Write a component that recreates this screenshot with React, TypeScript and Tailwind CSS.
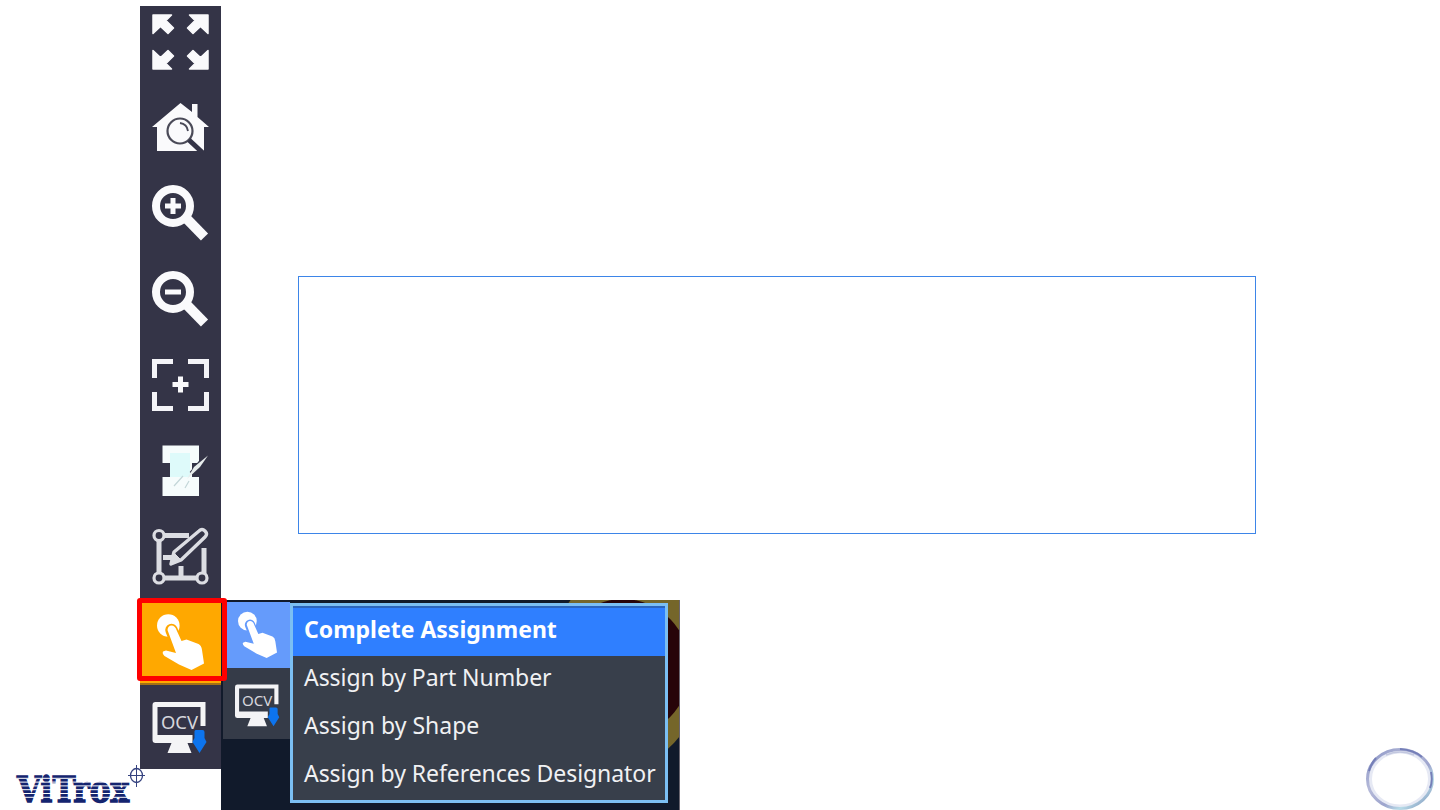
import type { ReactNode } from "react";

const HAND =
    "M10.500 16Q11 11.500 14.500 11.500Q18 11.500 19.500 16L24.500 27L29.500 25.500L41.500 30Q44.500 31.500 45 36L47 49.500L34.500 56L22 50.500L7.500 42Q5 39.500 6 37.500L9 36.500L19 39Z";

function HandIcon({ halo }: { halo: string }) {
    return (
        <g fill="#fff">
            <circle cx="11.300" cy="11.500" r="11.300" />
            <path d="M14.500 16L20 30" stroke={halo} strokeWidth="12.500" strokeLinecap="round" />
            <path d={HAND} />
        </g>
    );
}

function OcvIcon() {
    return (
        <g>
            <path fill="#f4f4f6" d="M3 0H53V24H48V5H5V33H40V41H35L39 51H15L19 41H3Q0 41 0 38V3Q0 0 3 0Z" />
            <text x="8.500" y="26.500" fontSize="18" textLength="37" lengthAdjust="spacingAndGlyphs" fill="#d6d6dc" className="font-['Noto_Sans']">
                OCV
            </text>
            <path fill="#0d74ee" d="M43 28H50Q52 28 52 30V36L54 40L47 51L40 40L42 36V29Z" />
        </g>
    );
}

function Magnifier({ children }: { children: ReactNode }) {
    return (
        <g fill="none" stroke="#fafafc">
            <circle cx="33" cy="36" r="17" strokeWidth="8" />
            <path d="M45 47L64.500 67" strokeWidth="10" />
            {children}
        </g>
    );
}

function Tool({ height, children }: { height: number; children: ReactNode }) {
    return (
        <button className="block w-full">
            <svg width="81" height={height} viewBox={`0 0 81 ${height}`} className="block">
                {children}
            </svg>
        </button>
    );
}

const arrow = "M13 9H31.500L26 14.500L33.500 22L28 27.500L20.500 20.500L13 27.500Z";

function Toolbar() {
    return (
        <aside className="relative mt-1.5 flex h-[763px] w-[81px] shrink-0 flex-col bg-[#343447]">
            <Tool height={80}>
                <g fill="#fafafc" stroke="#fafafc" strokeWidth="1.500" strokeLinejoin="round">
                    <path d={arrow} />
                    <path d={arrow} transform="translate(81 0) scale(-1 1)" />
                    <path d={arrow} transform="translate(0 72) scale(1 -1)" />
                    <path d={arrow} transform="translate(81 72) scale(-1 -1)" />
                </g>
            </Tool>
            <Tool height={84}>
                <path fill="#fafafc" d="M40.500 17L52 26V18H57.500V31L69 41H64V65H17V41H12Z" />
                <circle cx="40" cy="45" r="12.500" fill="none" stroke="#4a4a58" strokeWidth="2.200" />
                <path d="M40 37Q47 38 48 45" fill="none" stroke="#4a4a58" strokeWidth="1.800" />
                <path d="M49 54L64 68" stroke="#343447" strokeWidth="5" />
            </Tool>
            <Tool height={86}>
                <Magnifier>
                    <path d="M25 36H41M33 28V44" strokeWidth="5" />
                </Magnifier>
            </Tool>
            <Tool height={86}>
                <Magnifier>
                    <path d="M25 36H41" strokeWidth="5" />
                </Magnifier>
            </Tool>
            <Tool height={86}>
                <path
                    d="M14.500 36V19.500H33M48 19.500H66.500V36M66.500 50V66.500H48M33 66.500H14.500V50"
                    fill="none"
                    stroke="#f4f4f8"
                    strokeWidth="5"
                />
                <path d="M32.500 42.500H48.500M40.500 34.500V50.500" stroke="#fafafc" strokeWidth="5" />
            </Tool>
            <Tool height={86}>
                <path fill="#f6fcfc" d="M22.500 17.500H59V35H52V49H59V68H22.500V49H30V35H22.500Z" />
                <path fill="#defafa" d="M30 25H50V49H30Z" />
                <path d="M62 34L52 46" stroke="#343447" strokeWidth="6" />
                <path d="M68 27.500L60 39L47 51L54 39Z" fill="#e8eded" />
                <path d="M43 48L34 58M49 53L45 60" stroke="#c3d6d8" strokeWidth="1.200" />
            </Tool>
            <Tool height={86}>
                <g fill="none" stroke="#dcdde3" strokeWidth="5">
                    <path d="M19 26V60M23 21.500H49M24 64H59M64 34V59M23 43.500H34M41 52V64" />
                    <g fill="#343447" strokeWidth="3.200">
                        <circle cx="19" cy="21.500" r="5" />
                        <circle cx="19" cy="64" r="5" />
                        <circle cx="62" cy="64" r="5" />
                    </g>
                    <path
                        d="M31 50L34 38L59 17Q62 14 65 17Q68 20 65 23L41 46Z"
                        fill="#343447"
                        strokeWidth="3.400"
                        strokeLinejoin="round"
                    />
                    <path d="M31 50L34 39L40 45Z" fill="#dcdde3" strokeWidth="1" />
                </g>
            </Tool>
            <div className="border-b-2 border-[#a56f13] bg-[#ffa800]">
                <Tool height={83}>
                    <g transform="translate(17 14)">
                        <HandIcon halo="#ffa800" />
                    </g>
                </Tool>
            </div>
            <Tool height={84}>
                <g transform="translate(12.500 17)">
                    <OcvIcon />
                </g>
            </Tool>
            {/* highlight around the active tool */}
            <div className="absolute -left-[3px] top-[592px] z-10 h-[83px] w-[90px] rounded-[3px] border-5 border-[#fe0000]" />
        </aside>
    );
}

function AssignMenu() {
    return (
        <div className="relative flex h-[210px] w-[459px] overflow-hidden bg-[#111a2b]">
            {/* board visible behind the menu */}
            <svg width="459" height="210" className="absolute inset-0">
                <ellipse cx="405" cy="67" rx="76" ry="98" fill="#75662a" />
                <ellipse cx="402" cy="68" rx="67" ry="69" fill="#270409" />
                <path d="M458.500 0V210" stroke="#6b6670" />
            </svg>
            <div className="relative ml-0.5 mt-0.5 w-[67px]">
                <div className="h-[66px] bg-[#659bfb]">
                    <svg width="67" height="66">
                        <g transform="translate(15 9.500) scale(0.830)">
                            <HandIcon halo="#659bfb" />
                        </g>
                    </svg>
                </div>
                <div className="h-[71px] bg-[#353b48]">
                    <svg width="67" height="71">
                        <g transform="translate(12 16.500) scale(0.820)">
                            <OcvIcon />
                        </g>
                    </svg>
                </div>
            </div>
            <ul className="relative mt-[3px] flex h-[200px] w-[378px] flex-col whitespace-nowrap border-3 border-[#7bbff3] bg-[#383f4b] font-['Noto_Sans',sans-serif] text-[23px] text-[#f0f1f3]">
                <li className="flex h-[50px] items-center border-t-2 border-[#2b65bd] bg-[#2f7fff] pb-1.5 pl-[11px] font-bold text-white">
                    <span>Complete Assignment</span>
                </li>
                <li className="flex h-12 items-center pb-1.5 pl-[11px]"><span className="tracking-[-0.06px]">Assign by Part Number</span></li>
                <li className="flex h-12 items-center pb-1.5 pl-[11px]"><span>Assign by Shape</span></li>
                <li className="flex h-12 items-center pb-1.5 pl-[11px]"><span className="tracking-[-0.06px]">Assign by References Designator</span></li>
            </ul>
        </div>
    );
}

function Logo() {
    return (
        <svg width="135" height="50" viewBox="10 760 135 50" className="block shrink-0 overflow-visible">
            <text
                x="17"
                y="801.500"
                fontSize="34.500"
                fontWeight="700"
                textLength="112"
                lengthAdjust="spacingAndGlyphs"
                fill="#14246f"
                stroke="#14246f"
                strokeWidth="1.400"
                className="font-['DejaVu_Serif']"
            >
                ViTrox
            </text>
            <path
                d="M14 778.300H131M14 782.100H131M14 785.900H131M14 789.700H131M14 793.500H131M14 797.300H131"
                stroke="#fff"
                strokeWidth="1"
            />
            <g fill="none" stroke="#35427f">
                <ellipse cx="136.500" cy="775.500" rx="6" ry="7" strokeWidth="1.300" />
                <path d="M128 775.500H145M136.500 765V787" strokeWidth="1" />
            </g>
        </svg>
    );
}

function Ring() {
    return (
        <svg width="72" height="66" viewBox="0 0 72 66">
            <defs>
                <linearGradient id="ring" x1="0" y1="0" x2="1" y2="1">
                    <stop offset="0" stopColor="#8791c3" />
                    <stop offset="0.350" stopColor="#b5bad9" />
                    <stop offset="0.600" stopColor="#9da4cd" />
                    <stop offset="0.750" stopColor="#b8dce8" />
                    <stop offset="1" stopColor="#7484b2" />
                </linearGradient>
            </defs>
            <ellipse cx="36" cy="35" rx="30" ry="27.500" fill="none" stroke="#e6e9f4" strokeWidth="4" />
            <ellipse cx="36" cy="35" rx="32.500" ry="29.500" fill="none" stroke="url(#ring)" strokeWidth="3" />
            <path d="M22 11Q36 5 50 11" fill="none" stroke="#c2c7df" strokeWidth="1.500" />
            <path d="M5 27Q7 20 12 14M36 5Q50 6 58 13M67 28Q69 37 66 44" fill="none" stroke="#757fb8" strokeWidth="2" />
        </svg>
    );
}

export default function App() {
    return (
        <div className="flex h-[810px] w-[1440px] overflow-hidden bg-white">
            <div className="z-20 flex w-[140px] shrink-0 items-end pl-2.5">
                <Logo />
            </div>
            <Toolbar />
            <main className="flex flex-1 flex-col">
                <div className="ml-[77px] mt-[276px] h-[258px] w-[958px] border border-[#3d85e8]" />
                <div className="mt-[66px] flex items-end justify-between pr-1">
                    <AssignMenu />
                    <Ring />
                </div>
            </main>
        </div>
    );
}
